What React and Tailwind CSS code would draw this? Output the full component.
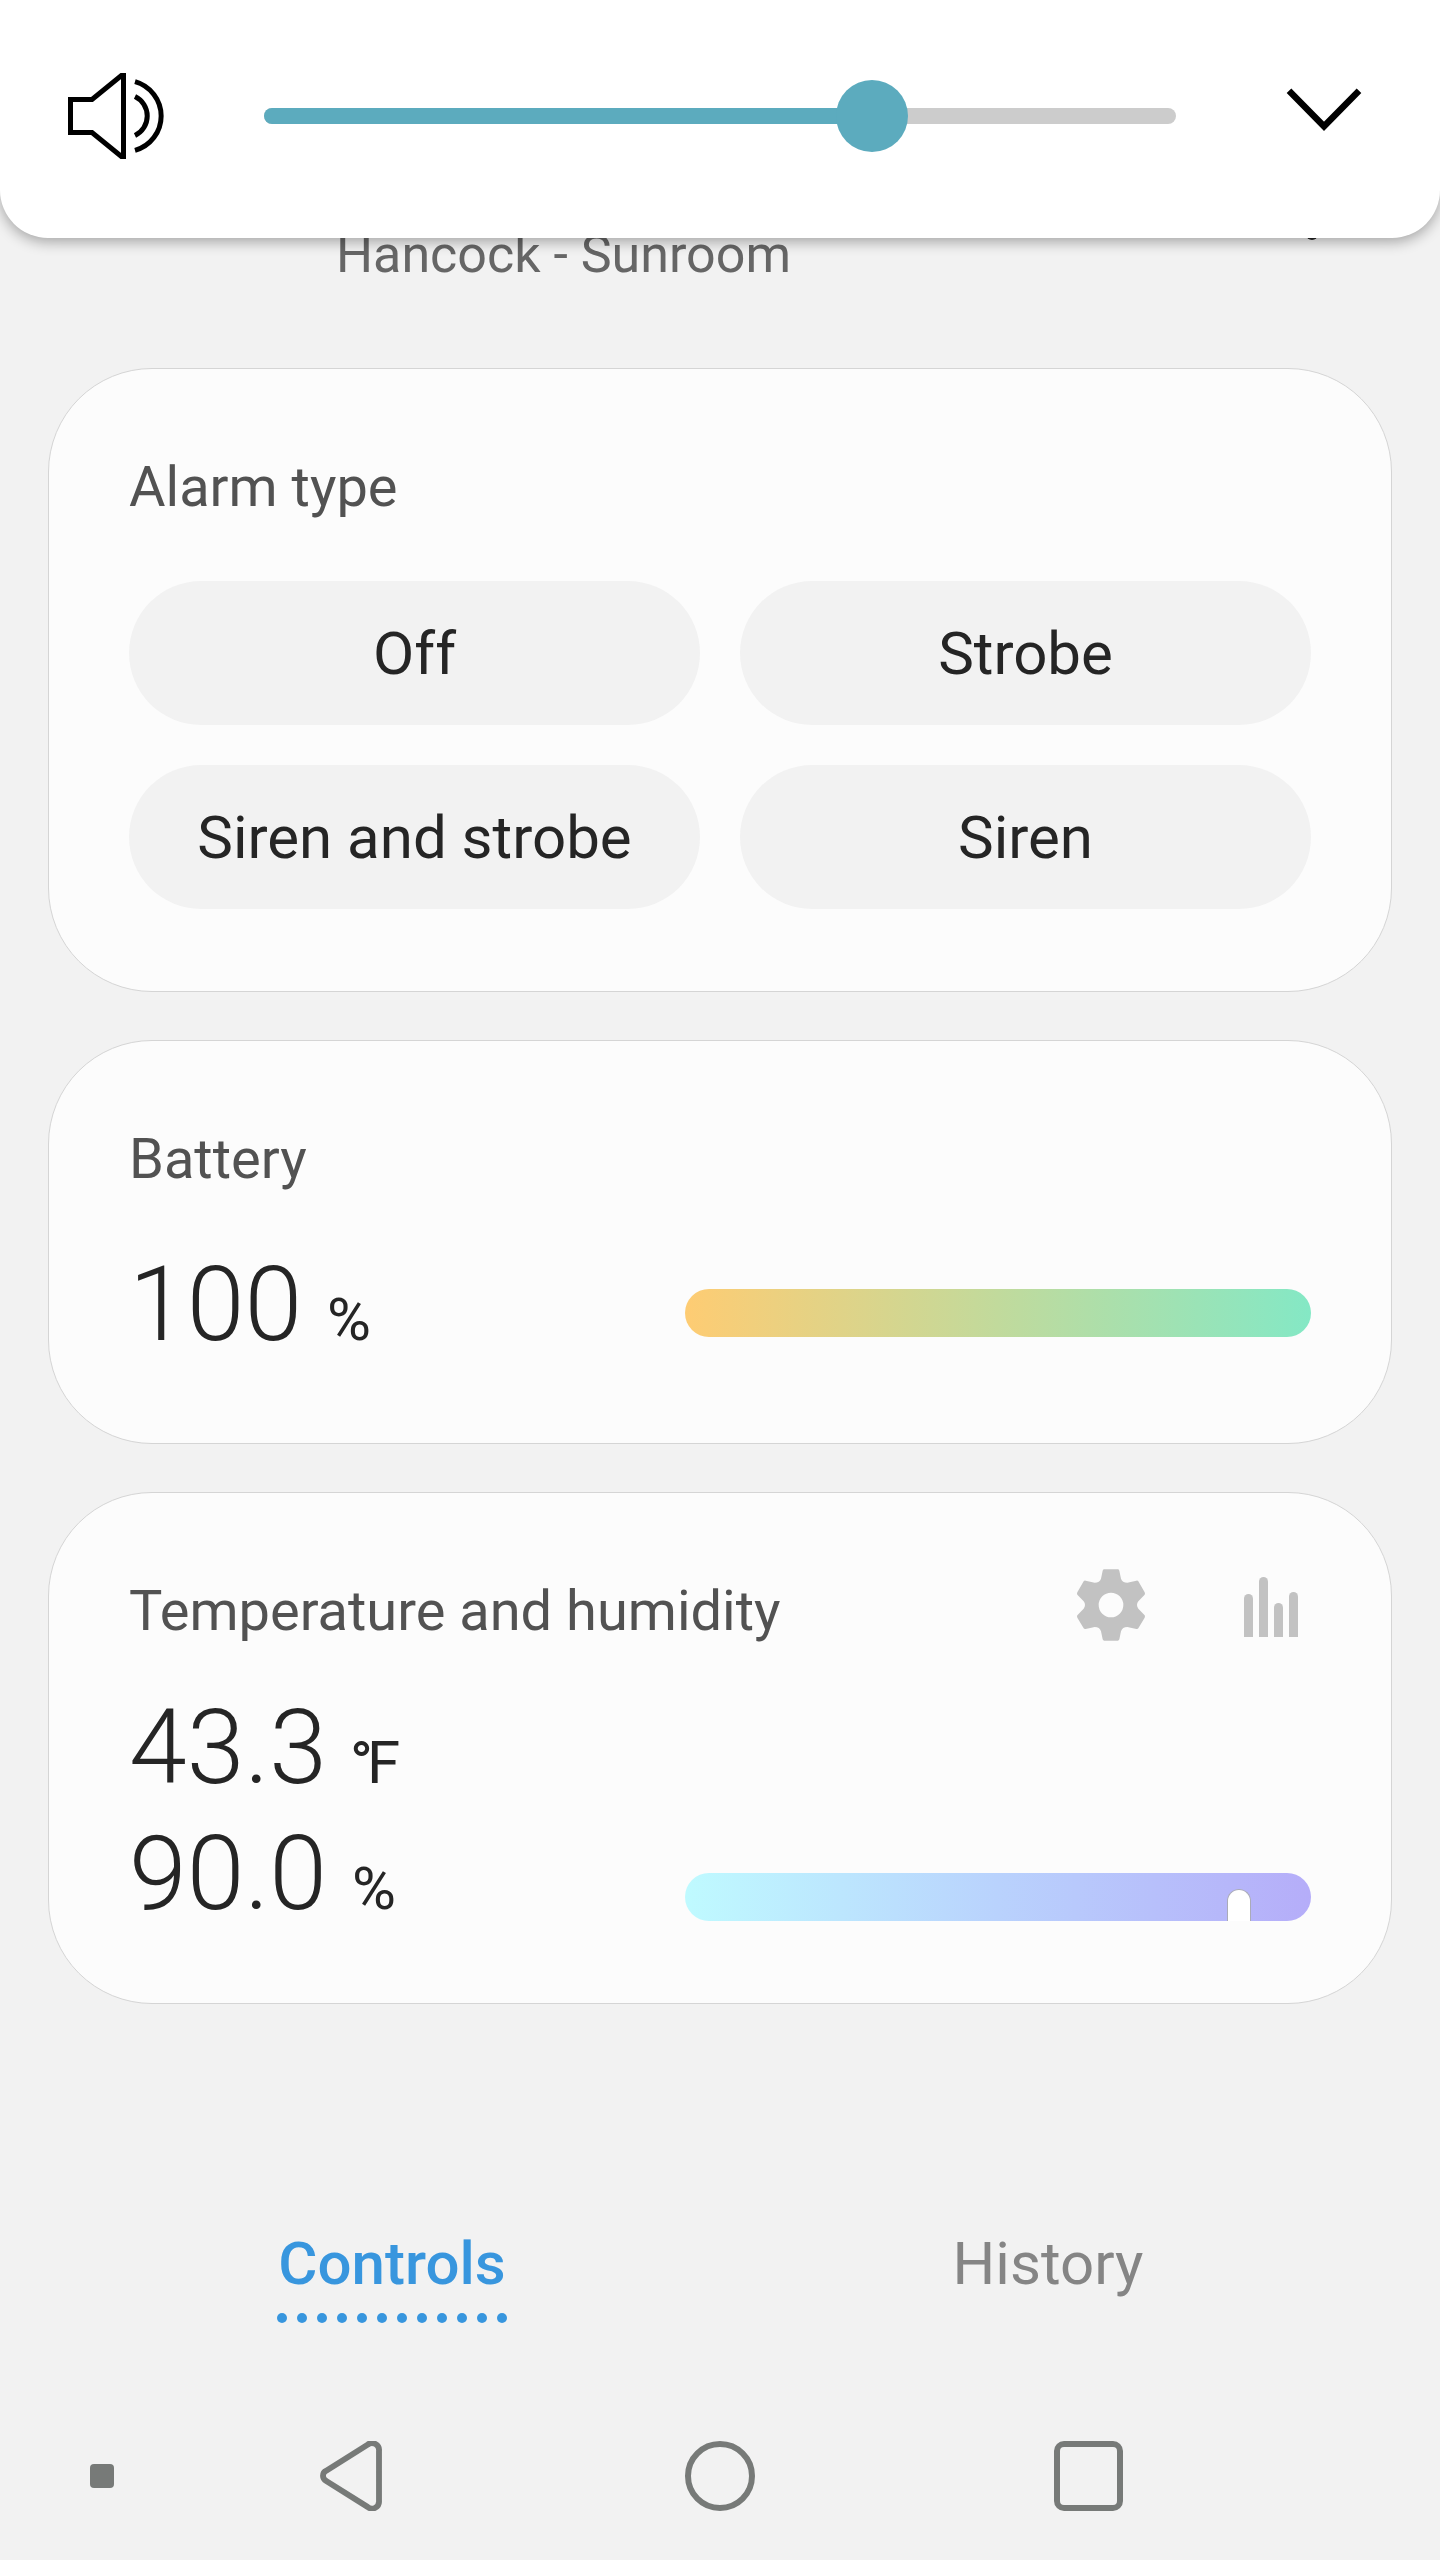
import React, { useState } from 'react';
import clsx from 'clsx';

const alarmTypes = ['Off', 'Strobe', 'Siren and strobe', 'Siren'];
const tabs = ['Controls', 'History'];

const SpeakerIcon = () => (
    <svg width="98" height="88" viewBox="68 72 98 88" fill="none" stroke="#000" strokeWidth="5">
        <path d="M123.5 75.5H121.4L92 99.5H70.5V132.5H92L121.4 156.5H123.5Z" />
        <path d="M135 81.6A35.7 35.7 0 0 1 135 150.4" />
        <path d="M135 96.6A21.5 21.5 0 0 1 135 135.4" />
    </svg>
);

const GearIcon = () => (
    <svg width="70" height="72" viewBox="228 117 210 216" fill="#c2c2c2">
        <path
            fillRule="evenodd"
            d="M313 118H353Q357 118 358 122L363 146Q367 158 382 158L409 152Q413 151 415 154L434 187Q436 191 434 194L415 214Q407 225 415 236L434 256Q436 259 434 263L415 295Q413 298 409 297L382 291Q367 291 363 304L358 328Q357 332 353 332H313Q309 332 308 328L303 304Q299 291 284 291L257 297Q253 298 251 295L232 263Q230 259 232 256L251 236Q259 225 251 214L232 194Q230 191 232 187L251 154Q253 151 257 152L284 158Q299 158 303 146L308 122Q309 118 313 118ZM333 188A37 37 0 1 0 333 262A37 37 0 1 0 333 188Z"
        />
    </svg>
);

const ChartIcon = () => (
    <div className="flex h-[60px] items-end gap-[6px]">
        <div className="h-[43px] w-[9px] rounded-t-full bg-[#c2c2c2]" />
        <div className="h-[60px] w-[9px] rounded-t-full bg-[#c2c2c2]" />
        <div className="h-[34px] w-[9px] rounded-t-full bg-[#c2c2c2]" />
        <div className="h-[45px] w-[9px] rounded-t-full bg-[#c2c2c2]" />
    </div>
);

const VolumePanel = ({ volume }) => (
    <div className="absolute inset-x-0 top-0 z-10 flex h-[238px] items-start rounded-b-[48px] bg-white pl-[68px] shadow-[0_4px_14px_rgba(0,0,0,0.32)]">
        <div className="mt-[72px]">
            <SpeakerIcon />
        </div>
        <div className="relative mt-[108px] ml-[98px] h-4 w-[912px] rounded-full bg-[#ccc]">
            <div className="h-4 rounded-full bg-[#5cabbe]" style={{ width: `${volume}%` }} />
            <div
                className="absolute -top-7 size-[72px] -translate-x-1/2 rounded-full bg-[#5cabbe]"
                style={{ left: `${volume}%` }}
            />
        </div>
        <svg className="mt-[86px] ml-[108px]" width="80" height="48" viewBox="1284 86 80 48" fill="none">
            <path d="M1289 90.8L1324 126.3L1359 90.8" stroke="#000" strokeWidth="6.5" />
        </svg>
    </div>
);

const Card = ({ className, children }) => (
    <section
        className={clsx(
            'mx-12 mb-12 rounded-[104px] border border-[#d5d5d5] bg-[#fcfcfc] px-20',
            className
        )}
    >
        {children}
    </section>
);

const Reading = ({ value, unit }) => (
    <div className="flex items-baseline whitespace-nowrap text-[#252525]">
        <span className="text-[104px] leading-[126px] font-light">{value}</span>
        <span className="ml-[25px] text-[60px]">{unit}</span>
    </div>
);

const App = () => {
    const [activeTab, setActiveTab] = useState('Controls');

    return (
        <div className="relative h-[2560px] w-[1440px] overflow-hidden bg-[#f2f2f2] font-[Roboto,sans-serif]">
            <VolumePanel volume={66.67} />

            <header className="flex h-[368px] items-start justify-between pt-[225px] pr-[122px] pl-[336px]">
                <p className="text-[52px] leading-[60px] text-[#666]">Hancock - Sunroom</p>
                <div className="mt-[3px] size-3 rounded-full bg-[#252525]" />
            </header>

            <Card className="h-[624px] pt-[85px]">
                <h2 className="text-[56px] leading-[66px] text-[#525252]">Alarm type</h2>
                <div className="mt-[61px] grid grid-cols-2 gap-10">
                    {alarmTypes.map(type => (
                        <button
                            key={type}
                            className="h-36 rounded-full bg-[#f2f2f2] pt-[2px] text-[60px] text-[#252525]"
                        >
                            {type}
                        </button>
                    ))}
                </div>
            </Card>

            <Card className="h-[404px] pt-[85px]">
                <h2 className="text-[56px] leading-[66px] text-[#525252]">Battery</h2>
                <div className="mt-[50px] flex items-start justify-between">
                    <Reading value="100" unit="%" />
                    <div className="mt-[47px] h-12 w-[626px] rounded-full bg-linear-to-r/srgb from-[#fecc73] to-[#84e8c5]" />
                </div>
            </Card>

            <Card className="h-[512px] pt-[85px]">
                <div className="flex justify-between">
                    <h2 className="text-[56px] leading-[66px] text-[#525252]">Temperature and humidity</h2>
                    <div className="flex items-start pr-[13px]">
                        <div className="-mt-[9px]">
                            <GearIcon />
                        </div>
                        <div className="-mt-px ml-[98px]">
                            <ChartIcon />
                        </div>
                    </div>
                </div>
                <div className="mt-[41px]">
                    <Reading
                        value="43.3"
                        unit={
                            <>
                                <span className="-ml-[2px] font-medium tracking-[-6px]">°</span>F
                            </>
                        }
                    />
                    <div className="flex items-start justify-between">
                        <Reading value="90.0" unit="%" />
                        <div className="relative mt-[62px] h-12 w-[626px] rounded-full bg-linear-to-r/srgb from-[#bffaff] via-[#b9d2fd] to-[#b5adf9]">
                            <div className="absolute right-[60px] bottom-0 h-8 w-6 rounded-t-full border border-b-0 border-[#aaabb8] bg-white" />
                        </div>
                    </div>
                </div>
            </Card>

            <nav className="mt-[225px] flex px-16">
                {tabs.map(tab => (
                    <button
                        key={tab}
                        onClick={() => setActiveTab(tab)}
                        className="flex w-[656px] flex-col items-center"
                    >
                        <span
                            className={clsx(
                                'text-[60px] leading-[70px]',
                                tab === activeTab ? 'font-medium text-[#3896de]' : 'text-[#858585]'
                            )}
                        >
                            {tab}
                        </span>
                        {tab === activeTab && (
                            <span className="mt-[14px] flex gap-[10px]">
                                {Array.from({ length: 12 }, (_, i) => (
                                    <span key={i} className="size-[10px] rounded-full bg-[#3896de]" />
                                ))}
                            </span>
                        )}
                    </button>
                ))}
            </nav>

            <footer className="mt-[118px] flex items-center pl-[90px]">
                <div className="size-6 rounded bg-[#777a78]" />
                <svg className="ml-[206px]" width="62" height="70" viewBox="780 63 186 210" fill="none">
                    <path
                        d="M957 93V243A21 21 0 0 1 923 261L799 183A17 17 0 0 1 799 152L923 74A21 21 0 0 1 957 93Z"
                        stroke="#777a78"
                        strokeWidth="17.5"
                    />
                </svg>
                <div className="ml-[303px] size-[70px] rounded-full border-6 border-[#777a78]" />
                <div className="ml-[299px] h-[70px] w-[69px] rounded-[10px] border-6 border-[#777a78]" />
            </footer>
        </div>
    );
};

export default App;
